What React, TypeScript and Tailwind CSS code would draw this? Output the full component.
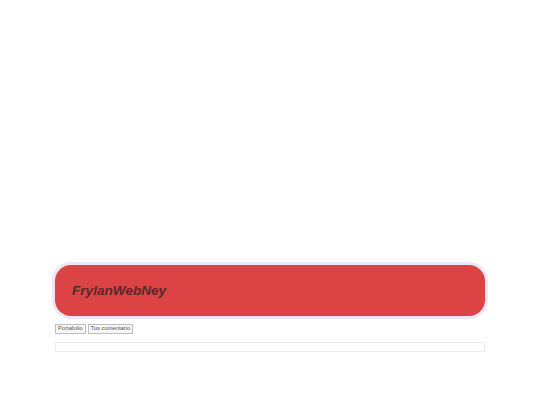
export default function App() {
  return (
    <div className="min-h-screen bg-white font-['Liberation_Sans',Arial,sans-serif]">
      <div className="px-[55px] pt-[265px]">
        {/* Header */}
        <div className="h-[51px] w-[430px] rounded-[16px] bg-[#db4344] ring-[3px] ring-[#ece6fb] flex items-center px-[17px]">
          <h1 className="text-[13.6px] font-bold italic text-[#552a2c] leading-none">FrylanWebNey</h1>
        </div>

        {/* Nav */}
        <div className="mt-[8px] flex gap-[2px]">
          <button className="h-[10px] px-[2px] border border-[#bdbdbd] bg-[#f6f6f6] text-[5.8px] leading-none text-[#555]">
            Portafolio
          </button>
          <button className="h-[10px] px-[2px] border border-[#bdbdbd] bg-[#f6f6f6] text-[5.8px] leading-none text-[#555]">
            Tus comentario
          </button>
        </div>

        {/* Content */}
        <div className="mt-[8px] h-[10px] w-[430px] border border-[#ececec]" />
      </div>
    </div>
  );
}
